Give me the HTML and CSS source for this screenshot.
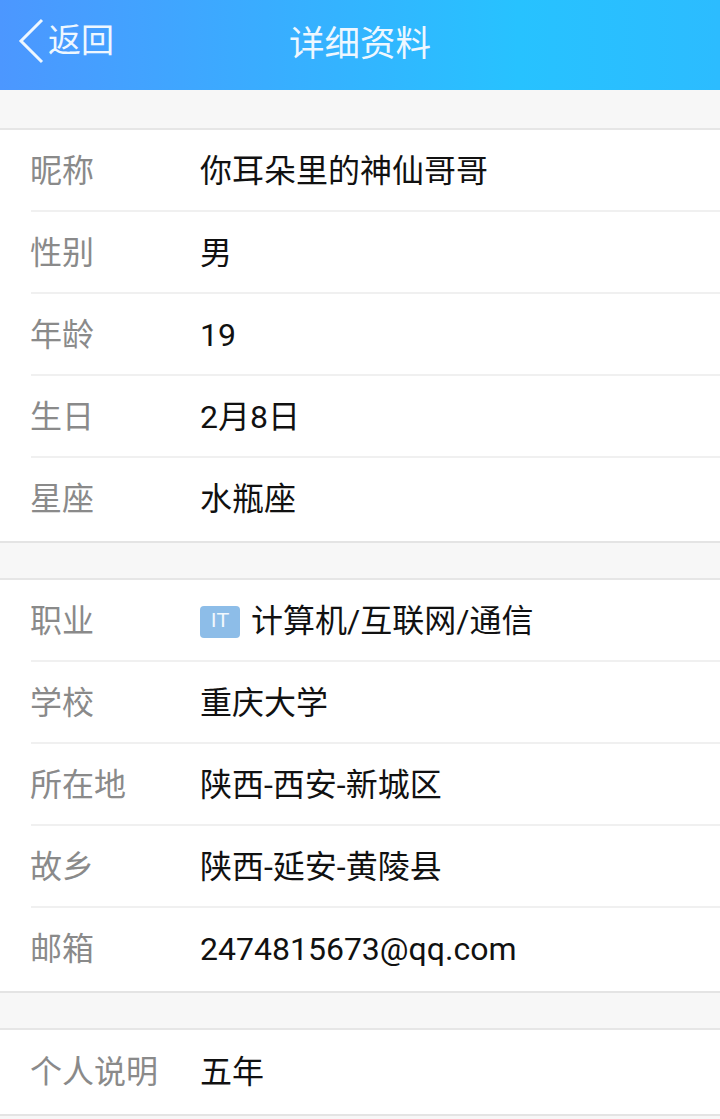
FILE: index.html
```html
<!DOCTYPE html>
<html lang="zh-CN">
<head>
  <meta charset="UTF-8" />
  <title>详细资料</title>
  <link rel="stylesheet" href="styles.css">
</head>
<body>
  <header class="topbar">
    <div class="back">
      <svg class="back-icon" width="28" height="46" viewBox="0 0 28 46">
        <path d="M25 2 L4 23 L25 44" fill="none" stroke="#eef7ff" stroke-width="3"/>
      </svg>
      <span>返回</span>
    </div>
    <div class="title">详细资料</div>
  </header>

  <section class="group">
    <div class="row"><span class="label">昵称</span><span class="value">你耳朵里的神仙哥哥</span></div>
    <div class="row"><span class="label">性别</span><span class="value">男</span></div>
    <div class="row"><span class="label">年龄</span><span class="value latin">19</span></div>
    <div class="row"><span class="label">生日</span><span class="value">2月8日</span></div>
    <div class="row"><span class="label">星座</span><span class="value">水瓶座</span></div>
  </section>

  <section class="group">
    <div class="row"><span class="label">职业</span><span class="value"><span class="tag">IT</span>计算机/互联网/通信</span></div>
    <div class="row"><span class="label">学校</span><span class="value">重庆大学</span></div>
    <div class="row"><span class="label">所在地</span><span class="value">陕西-西安-新城区</span></div>
    <div class="row"><span class="label">故乡</span><span class="value">陕西-延安-黄陵县</span></div>
    <div class="row"><span class="label">邮箱</span><span class="value latin">2474815673@qq.com</span></div>
  </section>

  <section class="group">
    <div class="row"><span class="label">个人说明</span><span class="value">五年</span></div>
  </section>
</body>
</html>
```

FILE: styles.css
```css
html, body {
  margin: 0;
  height: 1119px;
  overflow: hidden;
}
body {
  background-color: #f7f7f7;
  font-family: "Roboto", "Noto Sans CJK SC", sans-serif;
}
.topbar {
  display: grid;
  grid-template-columns: 1fr auto 1fr;
  align-items: center;
  height: 90px;
  background: linear-gradient(90deg, #4c97ff 0%, #27c2ff 72%, #2cbcff 100%);
  color: #eef7ff;
}
.back {
  display: flex;
  align-items: center;
  gap: 3px;
  padding-left: 17px;
  padding-bottom: 8px;
  font-size: 33px;
  line-height: 46px;
}
.back-icon {
  display: block;
}
.title {
  padding-bottom: 9px;
  font-size: 35.5px;
}
.group {
  margin-top: 38px;
  background-color: #fff;
  border-top: 2px solid #e6e6e6;
  border-bottom: 2px solid #e4e4e4;
  padding-left: 31px;
}
.group + .group {
  margin-top: 35px;
}
.row {
  display: flex;
  align-items: center;
  box-sizing: border-box;
  height: 82px;
  padding-bottom: 4px;
  border-bottom: 2px solid #f0f0f0;
  font-size: 32px;
}
.row:last-child {
  height: 83px;
  padding-bottom: 7px;
  border-bottom: 0;
}
.group:last-child .row {
  height: 84px;
  padding-bottom: 6px;
}
.label {
  width: 169px;
  margin-left: -1px;
  padding-right: 1px;
  color: #8a8a8a;
  flex-shrink: 0;
}
.value {
  display: flex;
  align-items: center;
  color: #111;
}
.latin {
  padding-top: 6px;
}
.tag {
  display: flex;
  align-items: center;
  justify-content: center;
  width: 40px;
  height: 32px;
  margin-top: 8px;
  margin-right: 11px;
  padding-bottom: 4px;
  box-sizing: border-box;
  border-radius: 4px;
  background-color: #8dbde8;
  color: #f2f8fd;
  font-family: "Liberation Sans", sans-serif;
  font-size: 21px;
}
```
